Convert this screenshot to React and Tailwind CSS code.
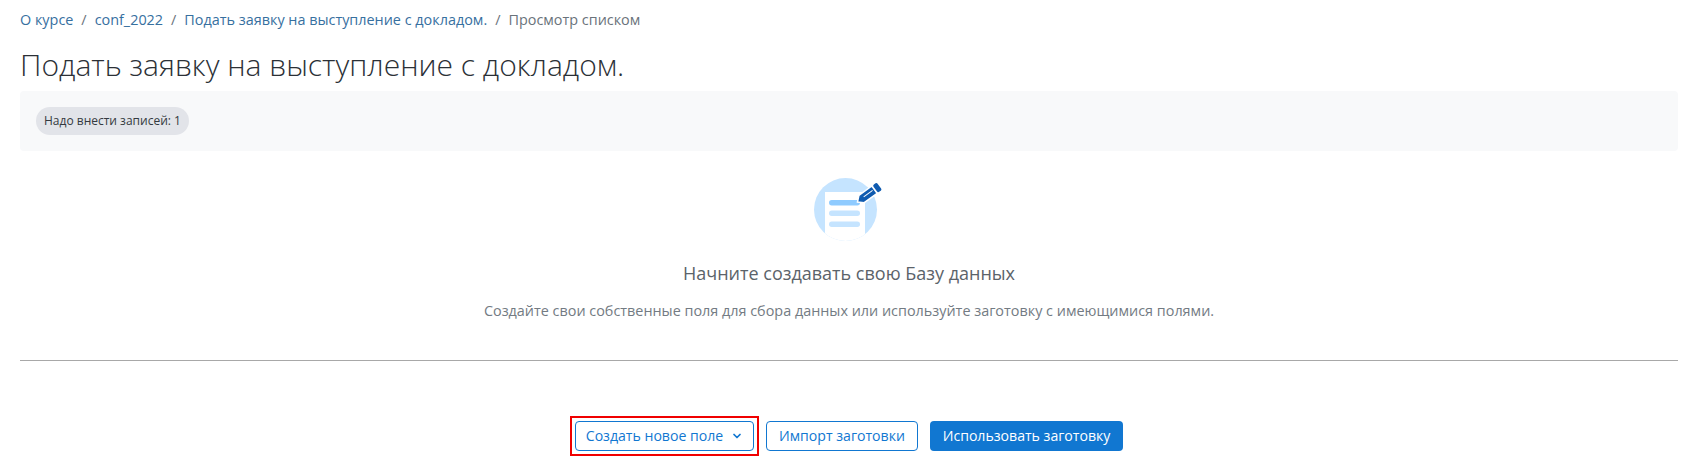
import { ChevronDown } from 'lucide-react';

function EmptyIcon() {
  return (
    <svg width="70" height="70" viewBox="0 0 70 70" fill="none">
      <defs>
        <clipPath id="disc">
          <circle cx="31.500" cy="37.500" r="31.500" />
        </clipPath>
      </defs>
      <circle cx="31.500" cy="37.500" r="31.500" fill="#c5e4ff" />
      <rect x="11" y="20" width="40" height="50" fill="#fff" clipPath="url(#disc)" />
      <rect x="15" y="28" width="31" height="5.500" rx="2.750" fill="#8fcbff" />
      <rect x="15" y="38.500" width="31" height="5.500" rx="2.750" fill="#c5e4ff" />
      <rect x="15" y="49.500" width="31" height="5.500" rx="2.750" fill="#c5e4ff" />
      <g transform="translate(43.500 30) rotate(-36)">
        <path d="M0 0L5 -4.500H21V4.500H5z" fill="#0f5bb0" stroke="#fff" strokeWidth="1.500" />
        <path d="M8 -.5H19" stroke="#fff" strokeWidth="1" />
        <rect x="22" y="-4.500" width="5" height="9" rx="1.500" fill="#0f5bb0" />
      </g>
    </svg>
  );
}

export default function App() {
  return (
    <div className="w-[1698px] h-[474px] overflow-hidden bg-white px-5 pt-[9px] font-['Open_Sans',sans-serif] text-[#495057]">
      <nav className="flex items-center gap-[8px] text-[14.400px] leading-[21px]">
        <a className="text-[#37709f]">О курсе</a>
        <span className="text-[#6a737b]">/</span>
        <a className="text-[#37709f]">conf_2022</a>
        <span className="text-[#6a737b]">/</span>
        <a className="text-[#37709f]">Подать заявку на выступление с докладом.</a>
        <span className="text-[#6a737b]">/</span>
        <span className="text-[#6a737b]">Просмотр списком</span>
      </nav>

      <h2 className="mt-[17px] text-[30px] font-light leading-[36px] text-[#2b3036]">Подать заявку на выступление с докладом.</h2>

      <div className="mt-[8px] h-[60px] flex items-center px-4 rounded-sm bg-[#f8f9fa]">
        <span className="h-[28px] flex items-center px-[8px] rounded-full bg-[#e2e4e9] text-[12px] text-[#343a40]">Надо внести записей: 1</span>
      </div>

      <div className="flex flex-col items-center">
        <div className="mt-[21px] h-[70px]"><EmptyIcon /></div>
        <h5 className="mt-[19px] text-[18px] leading-[24px] text-[#5b636a]">Начните создавать свою Базу данных</h5>
        <p className="mt-[15px] text-[14.400px] leading-[21px] text-[#737b83]">Создайте свои собственные поля для сбора данных или используйте заготовку с имеющимися полями.</p>
      </div>

      <hr className="mt-[39px] border-t border-[#a8a8a8]" />

      <div className="mt-[55px] pr-[5px] flex items-center justify-center">
        <div className="p-[3px] border-2 border-[#f00000]">
          <button className="h-[30px] w-[179px] flex items-center justify-center gap-[8px] rounded-[4px] border border-[#1177d1] text-[14.100px] text-[#1177d1]">
            Создать новое поле
            <ChevronDown size={12} strokeWidth={3.500} />
          </button>
        </div>
        <button className="ml-[7px] h-[30px] w-[152px] rounded-[4px] border border-[#1177d1] text-[14.100px] text-[#1177d1]">Импорт заготовки</button>
        <button className="ml-[12px] h-[30px] w-[193px] rounded-[4px] bg-[#1177d1] text-[14.100px] text-white">Использовать заготовку</button>
      </div>
    </div>
  );
}
